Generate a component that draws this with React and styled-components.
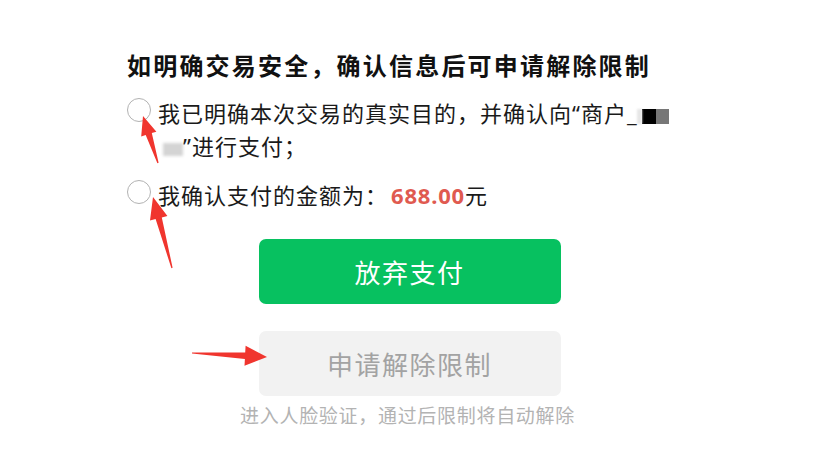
import React from 'react';
import styled, { createGlobalStyle } from 'styled-components';

// Stiluri globale
const GlobalStyle = createGlobalStyle`
  html, body {
    margin: 0;
    padding: 0;
    background: #ffffff;
  }
  body {
    font-family: "Noto Sans CJK SC", "Noto Sans", sans-serif;
  }
`;

const Page = styled.div`
  position: relative;
  width: 817px;
  height: 451px;
  padding-top: 50px;
  box-sizing: border-box;
  overflow: hidden;
`;

const Content = styled.div`
  padding-left: 127px;
`;

const Title = styled.h1`
  margin: 0;
  font-size: 24px;
  line-height: 30px;
  font-weight: 700;
  letter-spacing: 2.2px;
  color: #111;
  white-space: nowrap;
`;

const OptionRow = styled.div`
  display: flex;
  align-items: flex-start;
  gap: 7px;
  margin-top: ${(p) => p.$top}px;
`;

const Radio = styled.span`
  flex: none;
  width: 24px;
  height: 24px;
  margin-top: 2px;
  border: 1.5px solid #b2b2b2;
  border-radius: 50%;
  box-sizing: border-box;
`;

const OptionText = styled.div`
  font-size: 22px;
  line-height: 33px;
  letter-spacing: 1px;
  color: #1a1a1a;
  white-space: nowrap;
`;

// Ghilimele și liniuța în font latin, mai înguste
const Latin = styled.span`
  font-family: "Noto Sans", sans-serif;
  line-height: 1;
  letter-spacing: 0;
  margin-right: ${(p) => p.$mr || 0}px;
`;

const Masked = styled.span`
  display: inline-block;
  vertical-align: middle;
  width: ${(p) => p.$w}px;
  height: ${(p) => p.$h || 15}px;
  margin-left: ${(p) => p.$ml || 0}px;
  background: ${(p) => p.$bg};
  filter: ${(p) => (p.$blur ? `blur(${p.$blur}px)` : 'none')};
`;

const Amount = styled.span`
  font-family: "Noto Sans", "Noto Sans CJK SC", sans-serif;
  line-height: 1;
  font-weight: 700;
  color: #e05a50;
  margin-left: 3px;
  letter-spacing: 0.8px;
`;

const Actions = styled.div`
  display: flex;
  flex-direction: column;
  align-items: center;
  margin-top: 28px;
  padding-left: 2px;
`;

const Button = styled.div`
  width: 302px;
  height: 65px;
  border-radius: 7px;
  display: flex;
  align-items: center;
  justify-content: center;
  font-size: 26px;
  letter-spacing: 1.5px;
  background: ${(p) => (p.$primary ? '#07c160' : '#f2f2f2')};
  color: ${(p) => (p.$primary ? '#ffffff' : '#a3a3a3')};
  margin-top: ${(p) => p.$top || 0}px;
`;

const Hint = styled.div`
  margin-top: 7px;
  font-size: 19px;
  line-height: 24px;
  letter-spacing: 0.7px;
  color: #b3b3b3;
  margin-right: 4px;
`;

// Săgeți roșii de adnotare
const Overlay = styled.svg`
  position: absolute;
  left: 0;
  top: 0;
  pointer-events: none;
`;

function arrowPoints([tx, ty], [px, py], head = 20, half = 9, neck = 3.2, tail = 0.6) {
  const dx = px - tx;
  const dy = py - ty;
  const len = Math.hypot(dx, dy);
  const ux = dx / len;
  const uy = dy / len;
  const nx = -uy;
  const ny = ux;
  const bx = px - ux * head;
  const by = py - uy * head;
  const pts = [
    [tx + nx * tail, ty + ny * tail],
    [bx + nx * neck, by + ny * neck],
    [bx + nx * half, by + ny * half],
    [px, py],
    [bx - nx * half, by - ny * half],
    [bx - nx * neck, by - ny * neck],
    [tx - nx * tail, ty - ny * tail],
  ];
  return pts.map((p) => p.map((v) => v.toFixed(1)).join(',')).join(' ');
}

const Arrows = () => (
  <Overlay width="817" height="451" viewBox="0 0 817 451">
    <polygon points={arrowPoints([158, 163], [143, 116], 19, 8)} fill="#f0352e" />
    <polygon points={arrowPoints([172, 268], [153, 197], 22, 9)} fill="#f0352e" />
    <polygon points={arrowPoints([192, 353], [267, 357], 22, 10)} fill="#f0352e" />
  </Overlay>
);

const App = () => {
  return (
    <>
      <GlobalStyle />
      <Page>
        <Content>
          <Title>如明确交易安全，确认信息后可申请解除限制</Title>
          <OptionRow $top={16}>
            <Radio />
            <OptionText>
              我已明确本次交易的真实目的，并确认向<Latin $mr={1}>“</Latin>商户<Latin>_</Latin>
              <Masked $w={5} $bg="#e6e6e6" $blur={1} />
              <Masked $w={14} $bg="#000" />
              <Masked $w={13} $bg="#777" />
              <br />
              <Masked $w={20} $h={13} $ml={5} $bg="#d4d4d4" $blur={1.5} />
              <Latin $mr={1}>”</Latin>进行支付；
            </OptionText>
          </OptionRow>
          <OptionRow $top={16}>
            <Radio />
            <OptionText>
              我确认支付的金额为：<Amount>688.00</Amount>元
            </OptionText>
          </OptionRow>
        </Content>
        <Actions>
          <Button $primary>放弃支付</Button>
          <Button $top={27}>申请解除限制</Button>
          <Hint>进入人脸验证，通过后限制将自动解除</Hint>
        </Actions>
        <Arrows />
      </Page>
    </>
  );
};

export default App;
